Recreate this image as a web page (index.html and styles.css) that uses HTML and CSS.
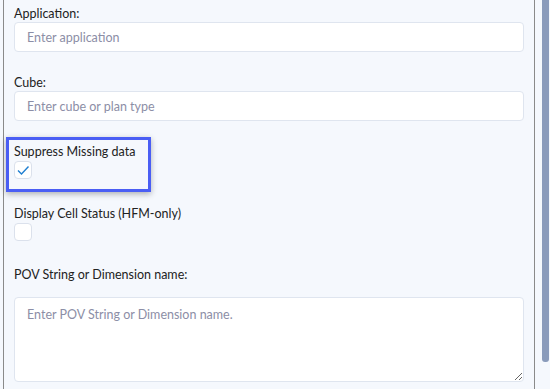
FILE: index.html
```html
<!DOCTYPE html>
<html lang="en">
<head>
    <meta charset="UTF-8">
    <meta name="viewport" content="width=device-width, initial-scale=1.0">
    <title>Query Settings</title>
    <link rel="stylesheet" href="styles.css">
</head>
<body>
    <div class="panel">
        <div class="field">
            <label for="app">Application:</label>
            <input id="app" type="text" placeholder="Enter application">
        </div>
        <div class="field">
            <label for="cube">Cube:</label>
            <input id="cube" type="text" placeholder="Enter cube or plan type">
        </div>
        <div class="check-field highlighted">
            <label>Suppress Missing data</label>
            <span class="checkbox checked">
                <svg width="14" height="14" viewBox="0 0 14 14"><path d="M2 7.5 L5.5 11 L12.5 3.5" fill="none" stroke="#1f7fd1" stroke-width="1.4"/></svg>
            </span>
        </div>
        <div class="check-field">
            <label>Display Cell Status (HFM-only)</label>
            <span class="checkbox"></span>
        </div>
        <div class="field">
            <label for="pov" class="spaced">POV String or Dimension name:</label>
            <textarea id="pov" placeholder="Enter POV String or Dimension name."></textarea>
        </div>
    </div>
    <div class="scrollbar">
        <div class="thumb"></div>
    </div>
</body>
</html>
```

FILE: styles.css
```css
body {
    margin: 0;
    height: 389px;
    overflow: hidden;
    background-color: #f5f8fd;
    font-family: Lato, "Noto Sans", sans-serif;
    font-size: 12.5px;
    color: #222;
    display: flex;
}
.panel {
    flex-shrink: 0;
    margin-left: 3px;
    width: 510px;
    padding: 5px 10px 0 10px;
    border-left: 1px solid #8a8a8a;
    border-right: 1px solid #8a8a8a;
    display: flex;
    flex-direction: column;
    align-items: flex-start;
}
.field {
    display: flex;
    flex-direction: column;
    width: 100%;
    margin-bottom: 22px;
}
.field label,
.check-field label {
    line-height: 17px;
}
.field label.spaced {
    margin-bottom: 14px;
}
.field input,
.field textarea {
    box-sizing: border-box;
    width: 100%;
    height: 30px;
    margin: 0;
    padding: 0 12px;
    border: 1px solid #dfe5ef;
    border-radius: 4px;
    background-color: #fff;
    font-family: inherit;
    font-size: 12.5px;
    color: #222;
    outline: none;
}
.field textarea {
    height: 85px;
    padding: 9px 12px;
    resize: vertical;
}
.field input::placeholder,
.field textarea::placeholder {
    color: #8c8ea6;
}
.check-field {
    display: flex;
    flex-direction: column;
    align-items: flex-start;
    margin-bottom: 25px;
}
.check-field.highlighted {
    margin: -6px 0 13px -8px;
    padding: 3px 13px 10px 5px;
    border: 3px solid #4a5ef4;
    box-shadow: 0 2px 6px rgba(0, 0, 0, 0.3);
}
.checkbox {
    box-sizing: border-box;
    width: 18px;
    height: 18px;
    margin-top: 1px;
    border: 1px solid #dbe1ec;
    border-radius: 4px;
    background-color: #fff;
    display: flex;
    align-items: center;
    justify-content: center;
}
.scrollbar {
    flex-shrink: 0;
    box-sizing: border-box;
    width: 15px;
    padding-left: 7px;
}
.thumb {
    width: 7px;
    height: 362px;
    background-color: #8a9bbb;
    border-radius: 0 0 3px 3px;
}
```
